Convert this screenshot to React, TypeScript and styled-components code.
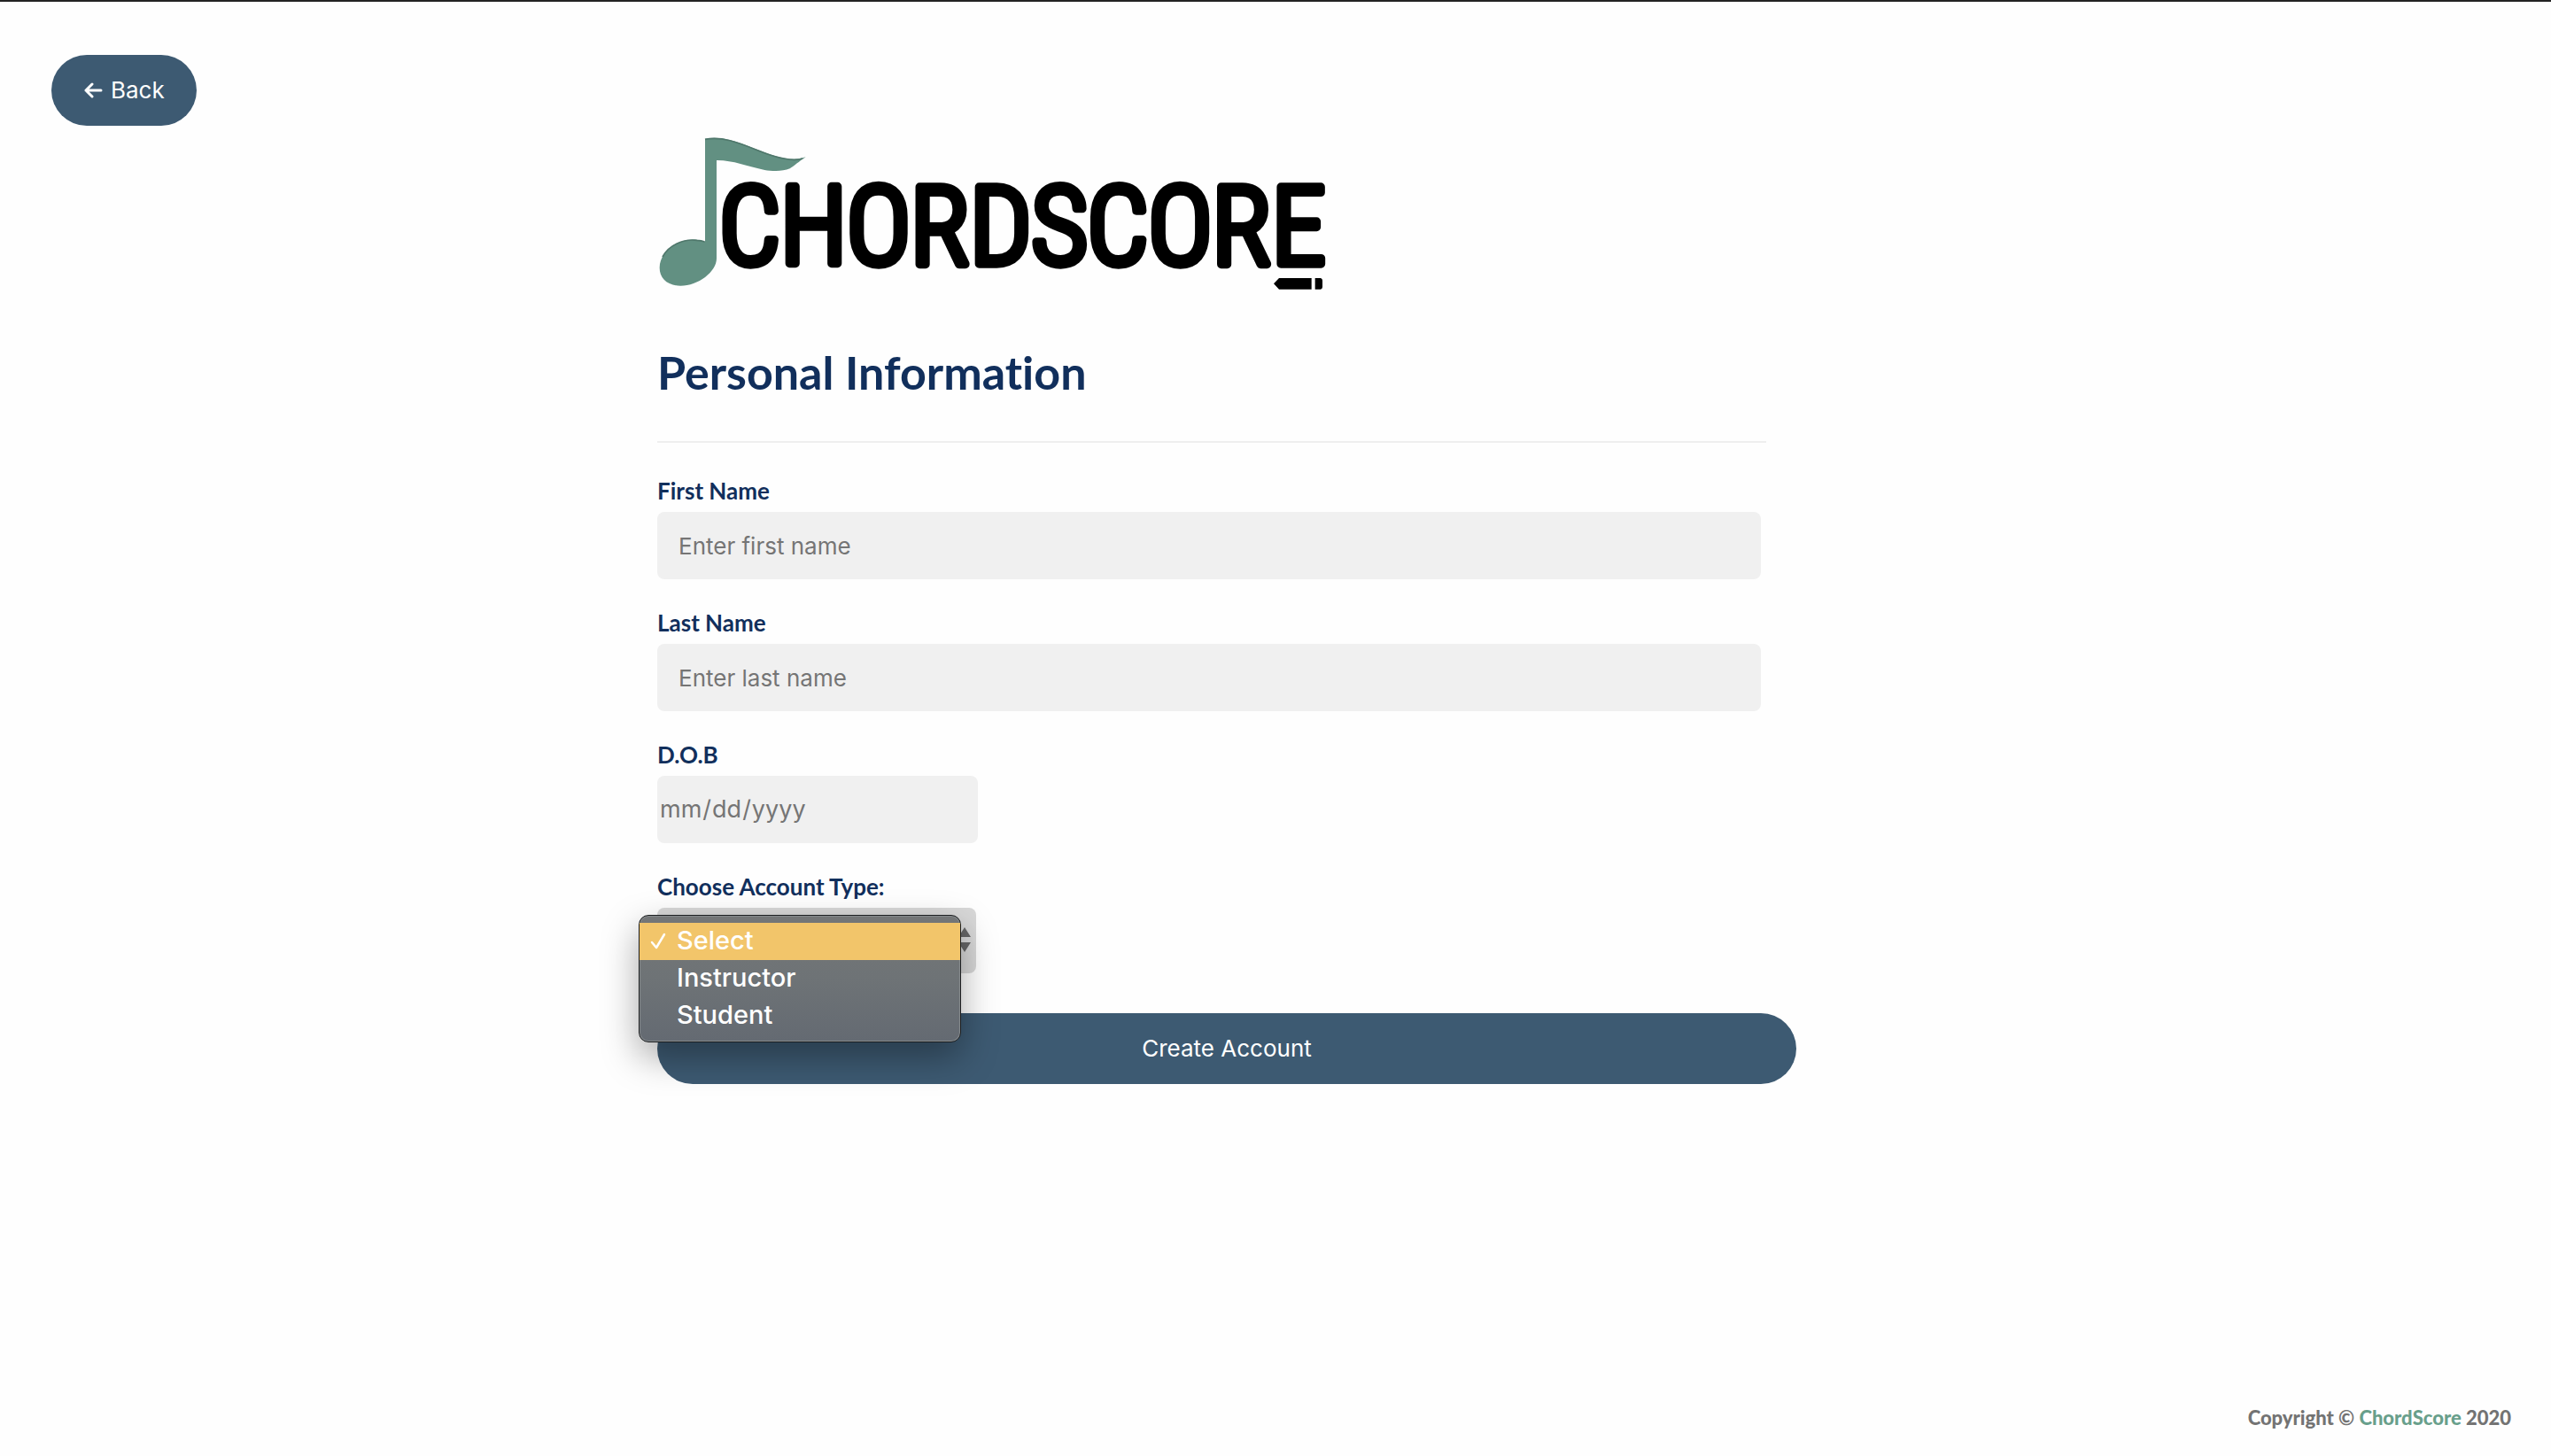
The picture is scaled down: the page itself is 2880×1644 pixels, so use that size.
import React, { useState } from "react";
import styled, { createGlobalStyle } from "styled-components";

const GlobalStyle = createGlobalStyle`
  *, *::before, *::after { box-sizing: border-box; }
  body { margin: 0; background: #fefefe; }
`;

const heading = `Lato, "Open Sans", sans-serif`;
const system = `Inter, Roboto, sans-serif`;

const Page = styled.div`
  display: flex;
  flex-direction: column;
  min-height: 100vh;
  border-top: 2px solid #232323;
  font-family: ${heading};
  font-variant-ligatures: none;
`;

const Header = styled.header`
  padding: 60px 58px 0;
`;

const PillButton = styled.button<{ $wide?: boolean }>`
  display: ${(p) => (p.$wide ? "block" : "inline-flex")};
  align-items: center;
  gap: 9px;
  width: ${(p) => (p.$wide ? "100%" : "auto")};
  height: 80px;
  padding: 0 36px;
  border: 0;
  border-radius: 40px;
  background: #3d5a72;
  color: #fff;
  font: 400 26px/32px ${system};
  cursor: pointer;
`;

const Main = styled.main`
  flex: 1;
  width: 100%;
  max-width: 1396px;
  margin: 0 auto;
  padding: 12px 110px 0 0;
`;

const Logo = styled.svg`
  display: block;
  width: 760px;
  max-width: 100%;
  height: auto;
`;

const Wordmark = styled.text`
  font-family: "Roboto Condensed", "Open Sans Condensed", "Liberation Sans Narrow", sans-serif;
  font-weight: 300;
  font-size: 366px;
  stroke: #000;
  stroke-width: 28px;
  stroke-linejoin: round;
`;

const Title = styled.h1`
  margin: 58px 0 46px;
  color: #112f5c;
  font-size: 52px;
  font-weight: 700;
  line-height: 64px;
`;

const Divider = styled.hr`
  height: 2px;
  margin: 0 34px 38px 0;
  border: 0;
  background: #efefef;
`;

const Fields = styled.div`
  display: grid;
  gap: 33px;
  margin-right: 40px;
  margin-bottom: 45px;
`;

const Field = styled.div`
  display: grid;
  gap: 8px;
  justify-items: start;
`;

const Label = styled.label`
  color: #112f5c;
  font-size: 26px;
  font-weight: 700;
  line-height: 32px;
`;

const TextInput = styled.input`
  width: 100%;
  height: 76px;
  padding: 0 24px;
  border: 0;
  border-radius: 8px;
  background: #f0f0f0;
  color: #333;
  font: 400 26px/32px ${system};
  &::placeholder { color: #757575; opacity: 1; }
`;

const DateInput = styled(TextInput)`
  width: 362px;
  padding: 0 2px;
  color: #757575;
  font-size: 27px;
  &::-webkit-calendar-picker-indicator { display: none; }
`;

const SelectBox = styled.div`
  position: relative;
  width: 360px;
`;

const Select = styled.select`
  display: block;
  width: 100%;
  height: 74px;
  padding: 0 24px;
  border: 0;
  border-radius: 8px;
  background: #d8d8d8;
  color: #333;
  font: 400 28px/32px ${system};
  appearance: none;
`;

const Arrows = styled.svg`
  position: absolute;
  top: 22px;
  right: 6px;
  width: 14px;
  height: 28px;
  fill: #666;
  pointer-events: none;
`;

const Menu = styled.ul`
  position: absolute;
  z-index: 1;
  top: 8px;
  left: -21px;
  width: 364px;
  margin: 0;
  padding: 8px 0;
  list-style: none;
  border: 1px solid #1c1e20;
  border-radius: 11px;
  background: linear-gradient(#747677, #6e7376 50%, #646a72);
  box-shadow: inset 0 0 0 1px #858a8c, 0 16px 40px rgba(0, 0, 0, 0.35);
`;

const MenuItem = styled.li<{ $selected: boolean }>`
  display: grid;
  grid-template-columns: 31px 1fr;
  align-items: center;
  height: 42px;
  padding: 0 0 2px 11px;
  background: ${(p) => (p.$selected ? "#f2c56a" : "transparent")};
  color: #fff;
  font: 500 29px/40px ${system};
  cursor: pointer;
`;

const Check = styled.svg`
  width: 20px;
  height: 20px;
  fill: none;
  stroke: #fff;
  stroke-width: 2.5;
  stroke-linecap: round;
  stroke-linejoin: round;
`;

const BackArrow = styled.svg`
  width: 22px;
  height: 18px;
  fill: none;
  stroke: #fff;
  stroke-width: 3;
  stroke-linecap: round;
  stroke-linejoin: round;
`;

const Footer = styled.footer`
  padding: 0 45px 28px;
  color: #737373;
  font-size: 22px;
  font-weight: 900;
  line-height: 30px;
  text-align: right;
`;

const FooterLink = styled.a`
  color: #689f8b;
  text-decoration: none;
`;

const accountTypes = ["Select", "Instructor", "Student"];

function ChordScoreLogo() {
  return (
    <Logo viewBox="66 72 2280 528" role="img" aria-label="ChordScore">
      <path
        fill="#629082"
        d="M228 80C330 60 430 148 530 149Q550 149 569 142C545 158 530 172 515 181C490 192 455 190 430 186C370 173 320 152 267 153V485C267 530 205 578 145 578C100 578 74 553 74 517C74 460 140 415 200 422Q215 423 228 429Z"
      />
      <path
        fill="none"
        stroke="#4f776b"
        strokeWidth="5"
        d="M228 82C330 62 430 150 530 151Q545 151 558 147M84 480C105 440 155 418 200 424Q215 425 227 429"
      />
      <Wordmark x="276" y="505">CHORDSCORE</Wordmark>
      <path d="M2154 571L2172 552H2282V590H2172ZM2294 552H2313Q2319 554 2319 560V582Q2319 588 2313 590H2294Z" />
    </Logo>
  );
}

export default function App() {
  const [account, setAccount] = useState("Select");

  return (
    <Page>
      <GlobalStyle />
      <Header>
        <PillButton type="button">
          <BackArrow viewBox="0 0 22 18" aria-hidden="true">
            <path d="M20 9H3M10 2L3 9L10 16" />
          </BackArrow>
          Back
        </PillButton>
      </Header>
      <Main>
        <ChordScoreLogo />
        <Title>Personal Information</Title>
        <Divider />
        <form onSubmit={(e) => e.preventDefault()}>
          <Fields>
            <Field>
              <Label htmlFor="first">First Name</Label>
              <TextInput id="first" type="text" placeholder="Enter first name" />
            </Field>
            <Field>
              <Label htmlFor="last">Last Name</Label>
              <TextInput id="last" type="text" placeholder="Enter last name" />
            </Field>
            <Field>
              <Label htmlFor="dob">D.O.B</Label>
              <DateInput id="dob" type="date" />
            </Field>
            <Field>
              <Label htmlFor="account">Choose Account Type:</Label>
              <SelectBox>
                <Select id="account" value={account} onChange={(e) => setAccount(e.target.value)}>
                  {accountTypes.map((t) => (
                    <option key={t}>{t}</option>
                  ))}
                </Select>
                <Arrows viewBox="0 0 14 28" aria-hidden="true">
                  <path d="M7 0L14 11H0ZM7 28L14 17H0Z" />
                </Arrows>
                <Menu role="listbox" aria-label="Account type">
                  {accountTypes.map((t) => (
                    <MenuItem
                      key={t}
                      role="option"
                      aria-selected={t === account}
                      $selected={t === account}
                      onClick={() => setAccount(t)}
                    >
                      {t === account ? (
                        <Check viewBox="0 0 20 20" aria-hidden="true">
                          <path d="M3 12L8 18L17 3" />
                        </Check>
                      ) : (
                        <span />
                      )}
                      <span>{t}</span>
                    </MenuItem>
                  ))}
                </Menu>
              </SelectBox>
            </Field>
          </Fields>
          <PillButton type="submit" $wide>
            Create Account
          </PillButton>
        </form>
      </Main>
      <Footer>
        Copyright © <FooterLink href="#">ChordScore</FooterLink> 2020
      </Footer>
    </Page>
  );
}
